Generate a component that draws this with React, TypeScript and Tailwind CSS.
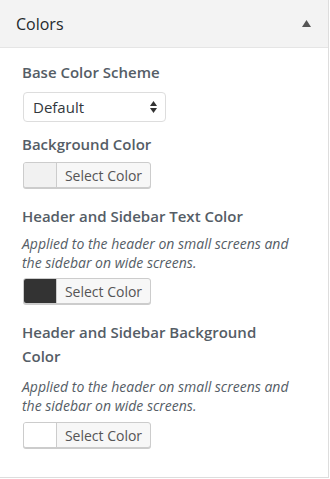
import React from "react"

const font = "font-['Open_Sans',sans-serif]"

function ColorButton({ swatch }: { swatch: string }) {
  return (
    <div className="ml-px flex h-[26px] w-[128px] overflow-hidden rounded-[3px] border border-[#ccc] bg-[#f7f7f7] shadow-[0_1px_0_#ccc]">
      <div className="w-[33px] border-r border-[#ccc]" style={{ backgroundColor: swatch }} />
      <div className="flex flex-1 items-center justify-center text-[14px] text-[#555]">Select Color</div>
    </div>
  )
}

function Label({ children }: { children: React.ReactNode }) {
  return <div className="text-[15px] leading-6 font-semibold text-[#555d66]">{children}</div>
}

function Description({ children }: { children: React.ReactNode }) {
  return <div className="text-[14px] leading-[18.5px] italic text-[#555d66]">{children}</div>
}

export default function App() {
  return (
    <div className={`h-[479px] w-[330px] bg-white ${font}`}>
      <div className="h-[478px] w-[329px] border-r border-b border-[#ddd]">
        {/* section header */}
        <div className="flex h-[48px] items-center justify-between border-b border-[#e5e5e5] bg-[#f3f3f3] pr-[17px] pl-4">
          <span className="text-[16px] text-[#23282d]">Colors</span>
          <svg width="9" height="7" viewBox="0 0 9 7">
            <path d="M4.5 0 L9 7 L0 7 Z" fill="#555" />
          </svg>
        </div>

        <div className="w-[294px] pt-3 pl-[22px]">
          <Label>Base Color Scheme</Label>
          <div className="mt-2 ml-px flex h-[30px] w-[143px] items-center justify-between rounded-[4px] border border-[#ddd] bg-white pr-[8px] pl-[9px] text-[15px] text-[#32373c]">
            <span>Default</span>
            <svg width="7" height="12" viewBox="0 0 7 12">
              <path d="M3.5 0 L7 5 L0 5 Z" fill="#333" />
              <path d="M3.5 12 L7 7 L0 7 Z" fill="#333" />
            </svg>
          </div>

          <div className="mt-[10px]">
            <Label>Background Color</Label>
          </div>
          <div className="mt-[6px]">
            <ColorButton swatch="#f1f1f1" />
          </div>

          <div className="mt-4">
            <Label>Header and Sidebar Text Color</Label>
          </div>
          <div className="mt-[7px]">
            <Description>
              Applied to the header on small screens and the sidebar on wide screens.
            </Description>
          </div>
          <div className="mt-[6px]">
            <ColorButton swatch="#333333" />
          </div>

          <div className="mt-4">
            <Label>Header and Sidebar Background Color</Label>
          </div>
          <div className="mt-[10px]">
            <Description>
              Applied to the header on small screens and the sidebar on wide screens.
            </Description>
          </div>
          <div className="mt-[7px]">
            <ColorButton swatch="#ffffff" />
          </div>
        </div>
      </div>
    </div>
  )
}
